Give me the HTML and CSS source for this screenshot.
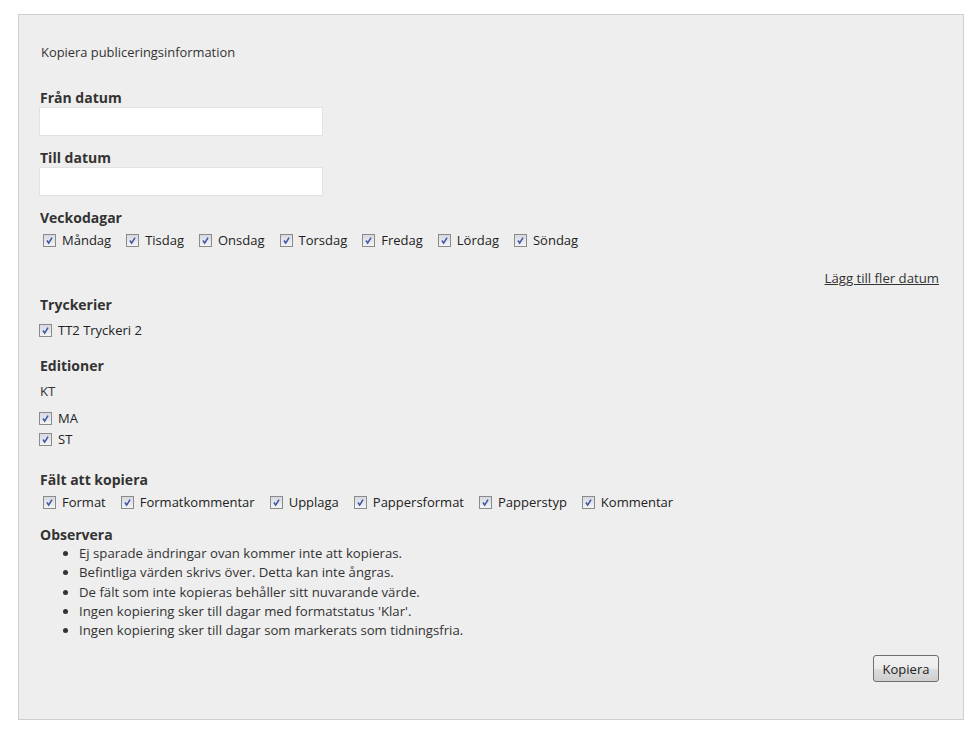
FILE: index.html
```html
<!DOCTYPE html>
<html lang="sv">
<head>
    <meta charset="UTF-8">
    <title>Kopiera publiceringsinformation</title>
    <link rel="stylesheet" href="styles.css">
</head>
<body>
    <div class="panel">
        <div class="title">Kopiera publiceringsinformation</div>

        <div class="field">
            <label class="heading">Från datum</label>
            <input type="text" class="date-input">
        </div>

        <div class="field">
            <label class="heading">Till datum</label>
            <input type="text" class="date-input">
        </div>

        <div class="heading">Veckodagar</div>
        <div class="check-row">
            <label class="check"><span class="box"><svg viewBox="0 0 13 13"><path d="M3.5 6.5 L5.5 9.5 L9.5 3" /></svg></span>Måndag</label>
            <label class="check"><span class="box"><svg viewBox="0 0 13 13"><path d="M3.5 6.5 L5.5 9.5 L9.5 3" /></svg></span>Tisdag</label>
            <label class="check"><span class="box"><svg viewBox="0 0 13 13"><path d="M3.5 6.5 L5.5 9.5 L9.5 3" /></svg></span>Onsdag</label>
            <label class="check"><span class="box"><svg viewBox="0 0 13 13"><path d="M3.5 6.5 L5.5 9.5 L9.5 3" /></svg></span>Torsdag</label>
            <label class="check"><span class="box"><svg viewBox="0 0 13 13"><path d="M3.5 6.5 L5.5 9.5 L9.5 3" /></svg></span>Fredag</label>
            <label class="check"><span class="box"><svg viewBox="0 0 13 13"><path d="M3.5 6.5 L5.5 9.5 L9.5 3" /></svg></span>Lördag</label>
            <label class="check"><span class="box"><svg viewBox="0 0 13 13"><path d="M3.5 6.5 L5.5 9.5 L9.5 3" /></svg></span>Söndag</label>
        </div>

        <div class="more">
            <a href="#">Lägg till fler datum</a>
        </div>

        <div class="heading">Tryckerier</div>
        <div class="stack">
            <label class="check"><span class="box"><svg viewBox="0 0 13 13"><path d="M3.5 6.5 L5.5 9.5 L9.5 3" /></svg></span>TT2 Tryckeri 2</label>
        </div>

        <div class="heading editions">Editioner</div>
        <div class="edition-name">KT</div>
        <div class="stack tight">
            <label class="check"><span class="box"><svg viewBox="0 0 13 13"><path d="M3.5 6.5 L5.5 9.5 L9.5 3" /></svg></span>MA</label>
            <label class="check"><span class="box"><svg viewBox="0 0 13 13"><path d="M3.5 6.5 L5.5 9.5 L9.5 3" /></svg></span>ST</label>
        </div>

        <div class="heading fields">Fält att kopiera</div>
        <div class="check-row">
            <label class="check"><span class="box"><svg viewBox="0 0 13 13"><path d="M3.5 6.5 L5.5 9.5 L9.5 3" /></svg></span>Format</label>
            <label class="check"><span class="box"><svg viewBox="0 0 13 13"><path d="M3.5 6.5 L5.5 9.5 L9.5 3" /></svg></span>Formatkommentar</label>
            <label class="check"><span class="box"><svg viewBox="0 0 13 13"><path d="M3.5 6.5 L5.5 9.5 L9.5 3" /></svg></span>Upplaga</label>
            <label class="check"><span class="box"><svg viewBox="0 0 13 13"><path d="M3.5 6.5 L5.5 9.5 L9.5 3" /></svg></span>Pappersformat</label>
            <label class="check"><span class="box"><svg viewBox="0 0 13 13"><path d="M3.5 6.5 L5.5 9.5 L9.5 3" /></svg></span>Papperstyp</label>
            <label class="check"><span class="box"><svg viewBox="0 0 13 13"><path d="M3.5 6.5 L5.5 9.5 L9.5 3" /></svg></span>Kommentar</label>
        </div>

        <div class="heading observe">Observera</div>
        <ul class="notes">
            <li>Ej sparade ändringar ovan kommer inte att kopieras.</li>
            <li>Befintliga värden skrivs över. Detta kan inte ångras.</li>
            <li>De fält som inte kopieras behåller sitt nuvarande värde.</li>
            <li>Ingen kopiering sker till dagar med formatstatus 'Klar'.</li>
            <li>Ingen kopiering sker till dagar som markerats som tidningsfria.</li>
        </ul>

        <div class="actions">
            <button class="btn">Kopiera</button>
        </div>
    </div>
</body>
</html>
```

FILE: styles.css
```css
* {
    margin: 0;
    padding: 0;
    box-sizing: border-box;
}

body {
    font-family: 'Open Sans', sans-serif;
    font-size: 13.2px;
    color: #333;
    background: #fff;
    padding: 14px 15px 19px 18px;
}

.panel {
    background: #eeeeee;
    border: 1px solid #cfcfcf;
    padding: 28px 24px 0 20px;
    height: 706px;
}

.title {
    font-size: 12.9px;
    color: #333;
    margin-left: 2px;
    margin-bottom: 27px;
}

.heading {
    display: block;
    font-weight: 700;
    font-size: 14px;
    color: #333;
    line-height: 19px;
    margin-left: 1px;
}

.field {
    margin-bottom: 12px;
}

.date-input {
    display: block;
    width: 284px;
    height: 29px;
    border: 1px solid #e2e2e2;
    background: #fff;
    outline: none;
}

.check-row {
    display: flex;
    gap: 15px;
    padding-left: 4px;
    margin-top: 4px;
}

.check {
    display: flex;
    align-items: center;
    gap: 6px;
    font-size: 13px;
    line-height: 19px;
    color: #222;
}

.box {
    width: 13px;
    height: 13px;
    border: 1px solid #8a8a8a;
    background: linear-gradient(#d6d9e0, #f4f4f6);
    display: inline-flex;
}

.box svg {
    width: 11px;
    height: 11px;
    fill: none;
    stroke: #3f54a6;
    stroke-width: 1.8;
}

.more {
    text-align: right;
    margin-top: 19px;
    margin-bottom: 8px;
}

.more a {
    color: #333;
}

.stack {
    display: flex;
    flex-direction: column;
    gap: 2px;
    margin-top: 7px;
}

.editions {
    margin-top: 16px;
}

.edition-name {
    margin-top: 7px;
    margin-left: 1px;
    line-height: 19px;
}

.stack.tight {
    margin-top: 8px;
}

.fields {
    margin-top: 21px;
}

.observe {
    margin-top: 13px;
}

.notes {
    list-style: disc;
    padding-left: 40px;
    line-height: 19.3px;
}

.actions {
    display: flex;
    justify-content: flex-end;
    margin-top: 15px;
}

.btn {
    font-family: 'Open Sans', sans-serif;
    font-size: 13px;
    color: #222;
    width: 66px;
    height: 27px;
    border: 1px solid #707070;
    border-radius: 3px;
    background: linear-gradient(#f2f2f2 0%, #ebebeb 50%, #dddddd 51%, #cfcfcf 100%);
}
```
